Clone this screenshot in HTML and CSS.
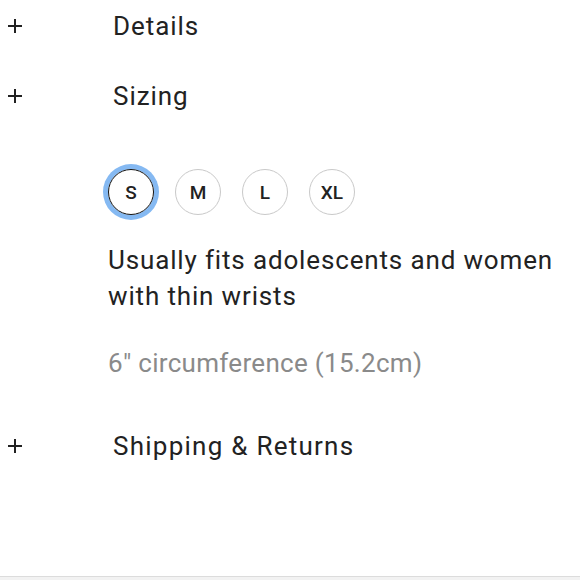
FILE: index.html
```html
<!DOCTYPE html>
<html>
<head>
<meta charset="utf-8">
<link rel="stylesheet" href="styles.css">
</head>
<body>
<div class="page">
  <div class="acc-row">
    <span class="plus"><svg width="16" height="16" viewBox="0 0 16 16"><path d="M8 1v14M1 8h14" stroke="#222" stroke-width="2"/></svg></span>
    <span class="acc-title">Details</span>
  </div>
  <div class="acc-row acc-second">
    <span class="plus"><svg width="16" height="16" viewBox="0 0 16 16"><path d="M8 1v14M1 8h14" stroke="#222" stroke-width="2"/></svg></span>
    <span class="acc-title">Sizing</span>
  </div>
  <div class="panel">
    <div class="sizes">
      <div class="size selected">S</div>
      <div class="size">M</div>
      <div class="size">L</div>
      <div class="size">XL</div>
    </div>
    <p class="desc">Usually fits adolescents and women with thin wrists</p>
    <p class="measure">6" circumference (15.2cm)</p>
  </div>
  <div class="acc-row acc-ship">
    <span class="plus"><svg width="16" height="16" viewBox="0 0 16 16"><path d="M8 1v14M1 8h14" stroke="#222" stroke-width="2"/></svg></span>
    <span class="acc-title acc-long">Shipping &amp; Returns</span>
  </div>
</div>
</body>
</html>
```
FILE: styles.css
```css
html, body {
  margin: 0;
  padding: 0;
  background: #f2f2f2;
}
body {
  font-family: Roboto, "Noto Sans", sans-serif;
  color: #222;
}
.page {
  height: 577px;
  box-sizing: border-box;
  background: #fff;
  border-bottom: 1px solid #dcdcdc;
}
.acc-row {
  display: flex;
  align-items: center;
  height: 52px;
}
.acc-second {
  margin-top: 18px;
}
.acc-ship {
  margin-top: 39px;
}
.plus {
  width: 113px;
  padding-left: 7px;
  box-sizing: border-box;
  display: flex;
  align-items: center;
}
.plus svg {
  display: block;
}
.acc-title {
  font-size: 26px;
  line-height: 52px;
  letter-spacing: 0.95px;
}
.acc-long {
  letter-spacing: 1.25px;
}
.panel {
  padding-left: 108px;
  padding-top: 47px;
}
.sizes {
  display: flex;
  gap: 21px;
}
.size {
  width: 46px;
  height: 46px;
  box-sizing: border-box;
  border: 1.5px solid #c9c9c9;
  border-radius: 50%;
  display: flex;
  align-items: center;
  justify-content: center;
  font-size: 19px;
  font-weight: 500;
  color: #222;
}
.size.selected {
  border-color: #111;
  box-shadow: 0 0 0 5px #85b9f2;
}
.desc {
  margin: 27px 0 0;
  font-size: 26px;
  line-height: 36px;
  letter-spacing: 0.85px;
  width: 470px;
}
.measure {
  margin: 31px 0 0;
  font-size: 26px;
  line-height: 36px;
  letter-spacing: 0.3px;
  color: #8a8a8a;
}
```
